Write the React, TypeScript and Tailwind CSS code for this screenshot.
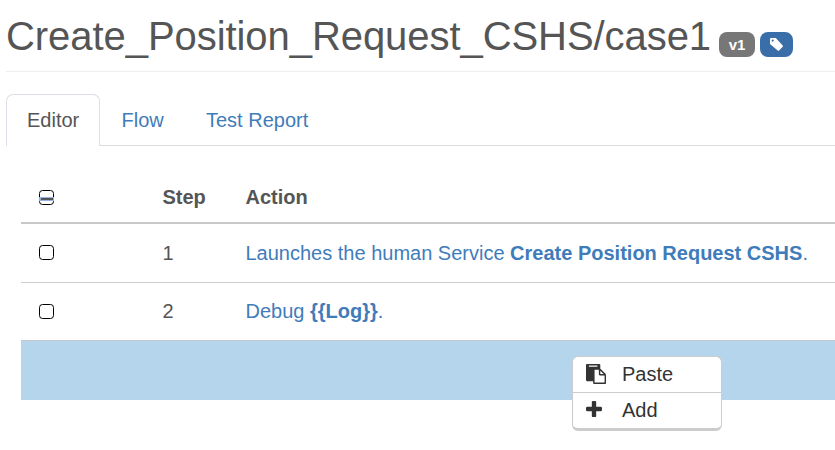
import React from 'react';

function CheckBox({ mixed = false }: { mixed?: boolean }) {
  return (
    <span className="relative block h-[15px] w-[15px] rounded-[3.5px] border-[1.5px] border-black bg-white">
      {mixed && (
        <span className="absolute -left-px top-[6px] block h-[4px] w-[15px] border border-l-2 border-[#94b1e2] bg-[#555]" />
      )}
    </span>
  );
}

function Row({ step, children }: { step: number; children: React.ReactNode }) {
  return (
    <>
      <div className="w-[141px] pl-[18px]">{children && <CheckBox />}</div>
      <div className="w-[83.5px] pl-[0.5px]">{step}</div>
      <div className="whitespace-nowrap text-[#3f7cba]">{children}</div>
    </>
  );
}

export default function App() {
  return (
    <div className="relative h-[450px] w-[835px] overflow-hidden bg-white font-['Liberation_Sans',Arial,sans-serif] text-[20px] leading-[28px] text-[#555]">
      <header className="ml-[6px] flex h-[72px] border-b border-[#eee]">
        <h1 className="w-[713px] whitespace-nowrap pt-[13px] text-[40px] leading-[46px] tracking-[-0.06px]">
          Create_Position_Request_CSHS/case1
        </h1>
        <span className="mt-[32px] h-[25px] w-[36px] rounded-[8px] bg-[#777] text-center text-[15px] font-bold leading-[26px] text-white">
          v1
        </span>
        <span className="ml-[5px] mt-[32px] flex h-[25px] w-[33px] justify-center rounded-[8px] bg-[#3a6ea8] pt-[6px]">
          <svg width="13" height="13" viewBox="0 0 13 13" fill="white">
            <path
              fillRule="evenodd"
              d="M0 1Q0 0 1 0H5.8L12.7 7.4Q13.3 8.1 12.7 8.8L9.1 12.5Q8.4 13.2 7.7 12.5L0 6ZM2.7 1.5A1.1 1.1 0 1 0 2.7 3.7A1.1 1.1 0 1 0 2.7 1.5Z"
            />
          </svg>
        </span>
      </header>

      <nav className="ml-[6px] mt-[22px] flex h-[52px] whitespace-nowrap leading-[51px]">
        <a className="w-[94px] rounded-t-[7px] border border-b-0 border-[#dcdfe5] pl-[20px]">Editor</a>
        <div className="flex flex-1 border-b border-[#ddd] text-[#3f7cba]">
          <a className="ml-[21.5px] mt-px w-[84.5px]">Flow</a>
          <a className="mt-px">Test Report</a>
        </div>
      </nav>

      <main className="ml-[21px]">
        <div className="mt-[26px] flex h-[52px] items-start border-b-2 border-[#c8c8c8] pt-[11px] font-bold">
          <div className="w-[141px] pl-[18px] pt-[7px]">
            <CheckBox mixed />
          </div>
          <div className="w-[83.5px] pl-[0.5px]">Step</div>
          <div>Action</div>
        </div>
        <div className="flex h-[59px] items-start border-b border-[#ccc] pt-[15px] [&>div:first-child]:pt-[6px]">
          <Row step={1}>
            Launches the human Service <b>Create Position Request CSHS</b>.
          </Row>
        </div>
        <div className="flex h-[58px] items-start border-b border-[#c4c8cc] pt-[14px] [&>div:first-child]:pt-[7px]">
          <Row step={2}>
            Debug <b>{'{{Log}}'}</b>.
          </Row>
        </div>
        <div className="h-[59px] bg-[#b5d5ec]" />
      </main>

      <div className="absolute left-[572px] top-[356px] h-[75px] w-[150px] overflow-hidden rounded-[6px] border border-b-[3px] border-[#ccc] bg-white text-[#333]">
        <div className="flex h-[36px] items-start border-b border-[#ccc] pl-[13px] pt-[3px]">
          <svg className="mt-[4px]" width="20" height="20" viewBox="0 0 1792 1792" fill="currentColor">
            <path d="M768 1664h896v-640h-416q-40 0-68-28t-28-68v-416h-384v1152zm256-1440v-64q0-13-9.5-22.5t-22.5-9.5h-704q-13 0-22.5 9.5t-9.5 22.5v64q0 13 9.5 22.5t22.5 9.5h704q13 0 22.5-9.5t9.5-22.5zm256 672h299l-299-299v299zm512 128v672q0 40-28 68t-68 28h-960q-40 0-68-28t-28-68v-160h-544q-40 0-68-28t-28-68v-1344q0-40 28-68t68-28h1088q40 0 68 28t28 68v328q21 13 36 28l408 408q28 28 48 76t20 88z" />
          </svg>
          <span className="ml-[16px]">Paste</span>
        </div>
        <div className="flex h-[35px] items-start pl-[13px] pt-[3px]">
          <svg className="mt-[5px]" width="16" height="16" viewBox="192 128 1408 1408" fill="currentColor">
            <path d="M1600 736v192q0 40-28 68t-68 28h-416v416q0 40-28 68t-68 28h-192q-40 0-68-28t-28-68v-416h-416q-40 0-68-28t-28-68v-192q0-40 28-68t68-28h416v-416q0-40 28-68t68-28h192q40 0 68 28t28 68v416h416q40 0 68 28t28 68z" />
          </svg>
          <span className="ml-[20px]">Add</span>
        </div>
      </div>
    </div>
  );
}
